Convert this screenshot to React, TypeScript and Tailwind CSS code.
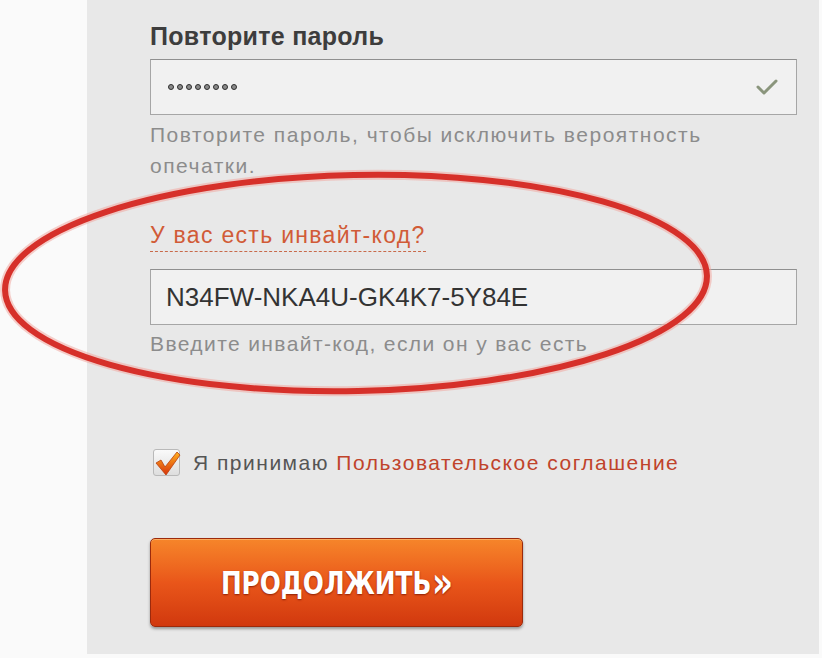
import React from "react";

const sans = "font-['Liberation_Sans',Arial,sans-serif]";

function PasswordDots() {
  return (
    <div className="flex items-center gap-[3px]">
      {Array.from({ length: 8 }).map((_, i) => (
        <span
          key={i}
          className="h-[6px] w-[6px] rounded-full border-[1.5px] border-[#2e2e2e] bg-[#8a8a8a]"
        />
      ))}
    </div>
  );
}

function CheckIcon() {
  return (
    <svg width="22" height="18" viewBox="0 0 22 18" className="shrink-0">
      <polyline
        points="2,9 8,15 20,3"
        fill="none"
        stroke="#8a957c"
        strokeWidth="3"
        strokeLinecap="round"
        strokeLinejoin="round"
      />
    </svg>
  );
}

function OrangeCheckbox() {
  return (
    <div className="relative h-[30px] w-[30px] shrink-0">
      <div className="absolute left-[1px] top-[1px] h-[27px] w-[27px] rounded-[3px] border border-[#b9b9b9] bg-gradient-to-b from-[#fafafa] to-[#dedede]" />
      <svg
        width="30"
        height="30"
        viewBox="0 0 30 30"
        className="absolute left-0 top-0"
      >
        <defs>
          <linearGradient id="chk" x1="0" y1="0" x2="0" y2="1">
            <stop offset="0" stopColor="#ffb21e" />
            <stop offset="1" stopColor="#d8320c" />
          </linearGradient>
        </defs>
        <path
          d="M4 15 L9 12 L13 19 L25 4 L28 7 L14 27 Z"
          fill="url(#chk)"
          stroke="#b8400e"
          strokeWidth="0.8"
          strokeLinejoin="round"
        />
      </svg>
    </div>
  );
}

function RedOval() {
  return (
    <svg
      className="pointer-events-none absolute left-0 top-0"
      width="822"
      height="658"
      viewBox="0 0 822 658"
    >
      <ellipse
        cx="356"
        cy="283"
        rx="351"
        ry="108"
        transform="rotate(-1.2 356 283)"
        fill="none"
        stroke="#f1a7a0"
        strokeWidth="10"
        opacity="0.55"
      />
      <ellipse
        cx="356"
        cy="283"
        rx="351"
        ry="108"
        transform="rotate(-1.2 356 283)"
        fill="none"
        stroke="#d6302a"
        strokeWidth="6"
      />
    </svg>
  );
}

export default function App() {
  return (
    <div className={`relative flex h-[658px] w-[822px] overflow-hidden bg-[#fafafa] ${sans}`}>
      <div className="w-[87px] shrink-0" />

      <div className="flex h-[654px] w-[732px] flex-col bg-[#e8e8e8] pl-[63px] pr-[22px] pt-[21px]">
        <h2 className="text-[25px] font-bold leading-[30px] tracking-[0.3px] text-[#3d3d3d]">
          Повторите пароль
        </h2>

        <div className="mt-[8px] flex h-[56px] items-center justify-between border border-[#a6a6a6] border-t-[#8f8f8f] bg-[#f1f1f1] pl-[17px] pr-[18px]">
          <PasswordDots />
          <CheckIcon />
        </div>

        <p className="mt-[4px] text-[21px] leading-[31px] tracking-[1.5px] text-[#8c8c8c]">
          Повторите пароль, чтобы исключить вероятность
          <br />
          опечатки.
        </p>

        <div className="mt-[39px] leading-[30px]">
          <span className="border-b-[1.5px] border-dashed border-[#c86a4a] pb-[3px] text-[23px] tracking-[1.3px] text-[#d15b37]">
            У вас есть инвайт-код?
          </span>
        </div>

        <div className="mt-[16px] flex h-[56px] items-center border border-[#a6a6a6] border-t-[#8f8f8f] bg-[#f1f1f1] pl-[15px]">
          <span className="text-[26px] text-[#333]">N34FW-NKA4U-GK4K7-5Y84E</span>
        </div>

        <p className="mt-[5px] text-[21px] leading-[28px] tracking-[1.4px] text-[#8c8c8c]">
          Введите инвайт-код, если он у вас есть
        </p>

        <label className="ml-[2px] mt-[90px] flex items-center gap-[11px]">
          <OrangeCheckbox />
          <span className="text-[21px] leading-[28px] tracking-[1.5px] text-[#555]">
            Я принимаю{" "}
            <span className="text-[#c0432b]">Пользовательское соглашение</span>
          </span>
        </label>

        <button className="mt-[60px] flex h-[89px] w-[373px] items-center justify-center rounded-[5px] border border-[#9c2a0c] bg-gradient-to-b from-[#f6852a] via-[#e9561a] to-[#d1380e] shadow-[0_2px_3px_rgba(0,0,0,0.35),inset_0_1px_0_rgba(255,190,120,0.7)]">
          <span className="flex scale-x-[0.86] items-center font-['Liberation_Sans_Narrow','DejaVu_Sans_Condensed',sans-serif] text-[32px] font-bold leading-none text-white [font-stretch:condensed] [text-shadow:0_1px_2px_rgba(120,20,0,0.8)]">
            ПРОДОЛЖИТЬ
            <span className="ml-[1px] text-[42px] leading-none">»</span>
          </span>
        </button>
      </div>

      <RedOval />
    </div>
  );
}
